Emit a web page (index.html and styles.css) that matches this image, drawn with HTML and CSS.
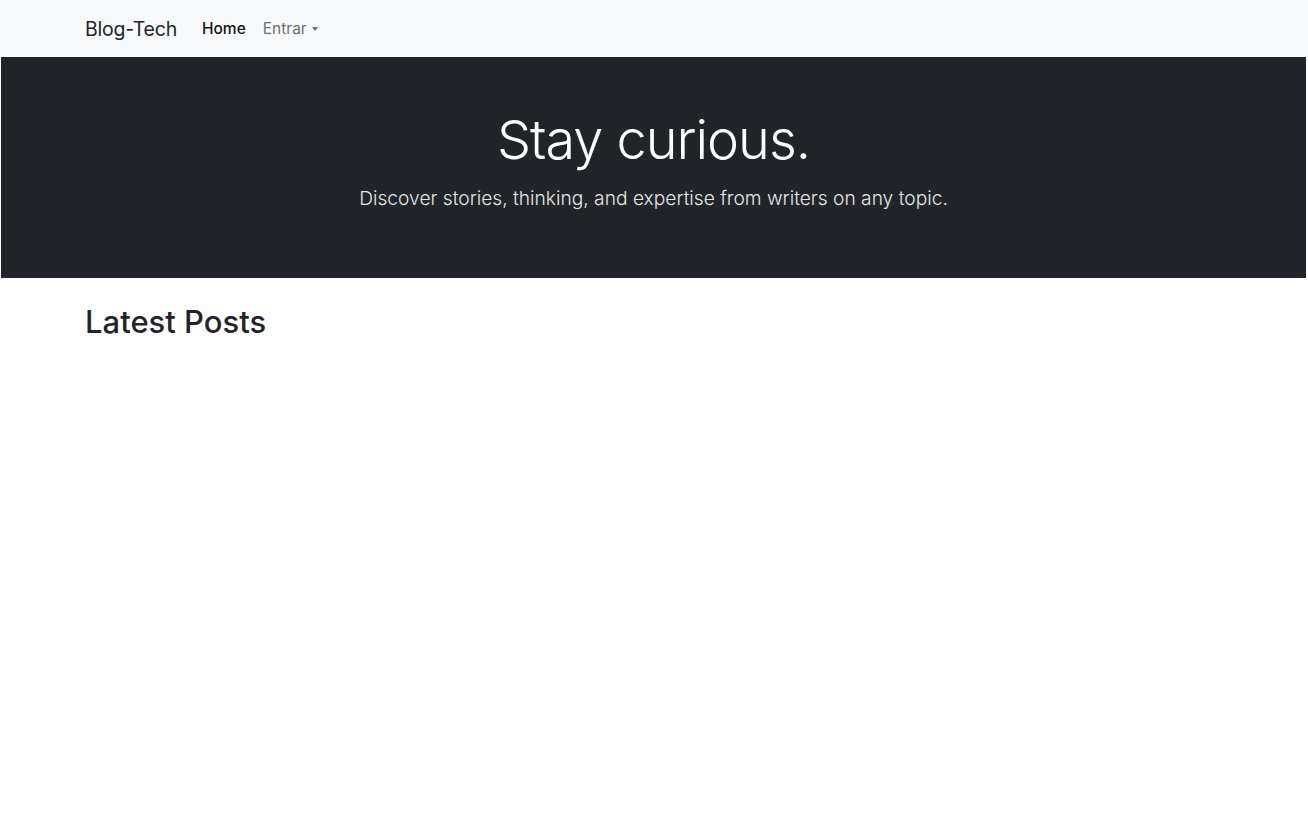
FILE: index.html
```html
<!DOCTYPE html>
<html lang="pt">
<head>
<meta charset="utf-8">
<title>Blog-Tech</title>
<link rel="stylesheet" href="styles.css">
</head>
<body>
<nav class="navbar">
  <div class="container nav-inner">
    <a class="brand" href="#">Blog-Tech</a>
    <ul class="nav-links">
      <li><a class="nav-link active" href="#">Home</a></li>
      <li><a class="nav-link dropdown" href="#">Entrar<span class="caret"></span></a></li>
    </ul>
  </div>
</nav>
<header class="hero">
  <h1 class="hero-title">Stay curious.</h1>
  <p class="hero-lead">Discover stories, thinking, and expertise from writers on any topic.</p>
</header>
<main class="container">
  <h2 class="section-title">Latest Posts</h2>
</main>
</body>
</html>
```
FILE: styles.css
```css
* { box-sizing: border-box; }
body {
  margin: 0;
  font-family: Inter, "Noto Sans", sans-serif;
  color: #212529;
  background: #fff;
}
.container {
  width: 100%;
  padding: 0 85px;
}
.navbar {
  background: #f8f9fa;
  height: 57px;
}
.nav-inner {
  display: flex;
  align-items: center;
  height: 100%;
}
.brand {
  font-size: 19.5px;
  color: #212529;
  text-decoration: none;
  margin-right: 25px;
  letter-spacing: -0.2px;
}
.nav-links {
  list-style: none;
  margin: 0;
  padding: 0;
  display: flex;
  gap: 17px;
}
.nav-link {
  font-size: 15.5px;
  text-decoration: none;
  color: #6c6f73;
  display: flex;
  align-items: center;
}
.nav-link.active { color: #111418; font-weight: 500; }
.caret {
  display: inline-block;
  margin-left: 5px;
  border-top: 4px solid #6c6f73;
  border-left: 3.5px solid transparent;
  border-right: 3.5px solid transparent;
}
.hero {
  background: #212529;
  color: #fff;
  height: 221px;
  margin: 0 2px 0 1px;
  text-align: center;
  padding-top: 51px;
}
.hero-title {
  margin: 0;
  font-size: 54px;
  font-weight: 300;
  line-height: 1.2;
  letter-spacing: -1px;
}
.hero-lead {
  margin: 13px 0 0;
  font-size: 19.2px;
  font-weight: 300;
  color: #e6e6e6;
}
.section-title {
  margin: 25px 0 0;
  font-size: 31px;
  font-weight: 500;
  line-height: 1.2;
}
```
